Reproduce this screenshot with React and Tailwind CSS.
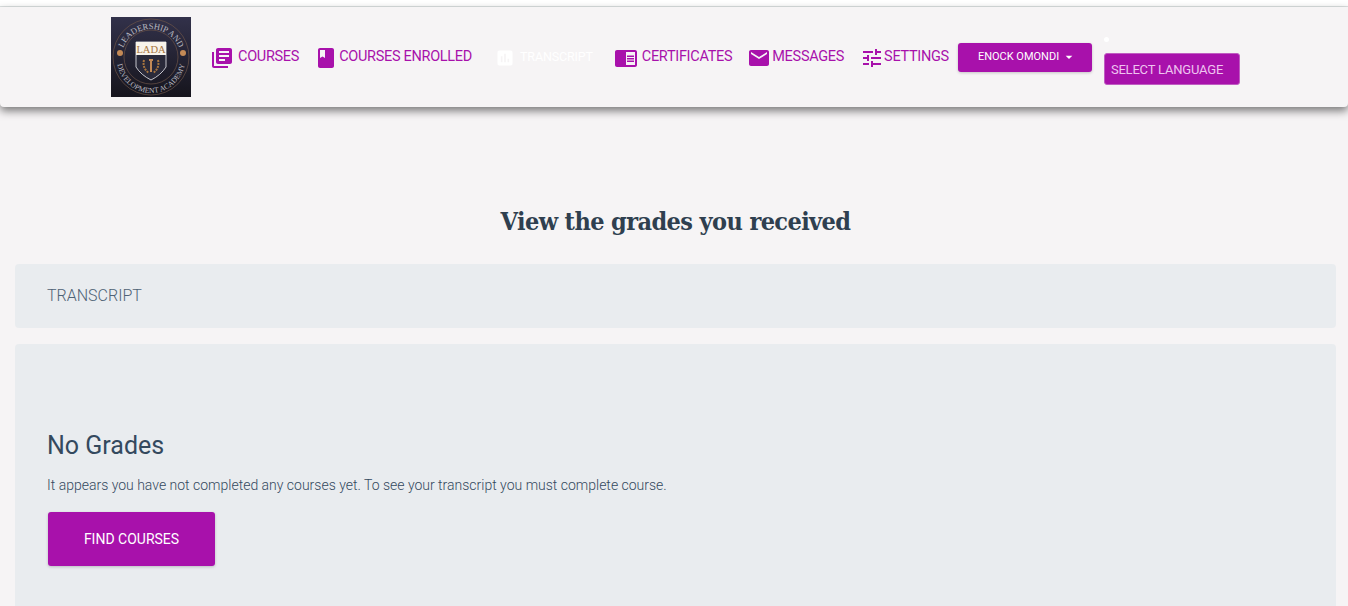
import { MdLibraryBooks, MdBook, MdAssessment, MdChromeReaderMode, MdEmail, MdTune, MdArrowDropDown } from 'react-icons/md'

function Logo() {
  return (
    <svg width="80" height="80" viewBox="0 0 80 80" className="shrink-0">
      <defs>
        <linearGradient id="logoBg" x1="0" y1="0" x2="0" y2="1">
          <stop offset="0" stopColor="#32314a" />
          <stop offset="1" stopColor="#16151d" />
        </linearGradient>
        <path id="arcTop" d="M10 42 A30 30 0 0 1 70 42" />
        <path id="arcBottom" d="M6 42 A34 34 0 0 0 74 42" />
      </defs>
      <rect width="80" height="80" fill="url(#logoBg)" />
      <circle cx="40" cy="40" r="38" fill="none" stroke="#6b5347" strokeWidth="0.7" />
      <circle cx="40" cy="40" r="27" fill="none" stroke="#6b5347" strokeWidth="0.7" />
      <text fontSize="8.500" fill="#b9b9c0" fontFamily="Liberation Serif, serif">
        <textPath href="#arcTop" startOffset="50%" textAnchor="middle">LEADERSHIP AND</textPath>
      </text>
      <text fontSize="7.600" fill="#b9b9c0" fontFamily="Liberation Serif, serif">
        <textPath href="#arcBottom" startOffset="50%" textAnchor="middle">DEVELOPMENT ACADEMY</textPath>
      </text>
      <circle cx="9" cy="36" r="3" fill="#c48a56" />
      <circle cx="72" cy="36" r="3" fill="#c48a56" />
      <path d="M25 25 H55 V50 Q50 58 40 63 Q30 58 25 50 Z" fill="#2a2a3a" stroke="#c5c5cc" strokeWidth="1" />
      <rect x="25" y="25" width="30" height="13" fill="#f8f3ea" />
      <text x="40" y="36" fontSize="10.500" fill="#a7753f" textAnchor="middle" fontFamily="Liberation Serif, serif">LADA</text>
      <path d="M40 43 V55 M38 43 H42" stroke="#c48a56" strokeWidth="2" fill="none" />
      <path d="M33 43 Q31 51 38 56 M47 43 Q49 51 42 56" stroke="#a7753f" strokeWidth="2" fill="none" strokeDasharray="2 1" />
    </svg>
  )
}

function NavLink({ icon: Icon, size, label, className }) {
  return (
    <a className={`flex items-center shrink-0 leading-6 ${className}`}>
      <Icon size={size} className="mt-[2px]" />
      <span>{label}</span>
    </a>
  )
}

export default function App() {
  return (
    <div className="h-[606px] overflow-hidden bg-[#f6f4f5] font-['Roboto',sans-serif] text-[#34495e]">
      <div className="h-[7px] bg-white border-b border-[#dde2e2]" />

      {/* Header */}
      <nav className="relative h-[100px] pl-[111px] flex items-center bg-[#f6f4f5] rounded-b-[4px] shadow-[0_4px_8px_rgba(0,0,0,0.5)]">
        <Logo />
        <div className="flex items-center text-[#a811ab] text-[14.5px] tracking-[-0.3px]">
          <NavLink icon={MdLibraryBooks} size={24} label="COURSES" className="ml-[19px] gap-[4px]" />
          <NavLink icon={MdBook} size={24} label="COURSES ENROLLED" className="ml-[15px] gap-[1px]" />
          <NavLink icon={MdAssessment} size={20} label="TRANSCRIPT" className="ml-[23px] gap-[5px] text-white text-[12.5px] tracking-[-0.15px]" />
          <NavLink icon={MdChromeReaderMode} size={24} label="CERTIFICATES" className="ml-[21px] gap-[4px]" />
          <NavLink icon={MdEmail} size={24} label="MESSAGES" className="ml-[15px] gap-[1px]" />
          <NavLink icon={MdTune} size={24} label="SETTINGS" className="ml-[16px] gap-0" />
          <button className="ml-[9px] w-[134px] h-[29px] pl-[20px] flex items-center rounded-[3px] bg-[#a811ab] text-white text-[11px] tracking-normal shadow-[0_1px_3px_rgba(0,0,0,0.2)]">
            ENOCK OMONDI
            <MdArrowDropDown size={16} className="ml-[2px]" />
          </button>
          <div className="relative ml-[12px] mt-[24px]">
            <span className="absolute -top-[16px] left-0 w-[5px] h-[5px] rounded-full bg-white" />
            <div className="w-[136px] h-[32px] pl-[6px] pt-[2px] flex items-center rounded-[3px] bg-[#a811ab] text-[#eec4ef] text-[13px] tracking-[-0.2px] border border-[#c05cc2]">
              SELECT LANGUAGE
            </div>
          </div>
        </div>
      </nav>

      <main className="pl-[15px] pr-[12px]">
        <h1 className="mt-[98px] text-center font-['DejaVu_Serif',serif] [font-stretch:condensed] font-bold text-[25px] leading-[34px] tracking-[-0.6px] text-[#2f3f4f]">
          View the grades you received
        </h1>

        <div className="mt-[25px] h-[64px] pl-[32px] flex items-center rounded-[4px] bg-[#e9ecef] text-[16px] text-[#4f6275] font-light">
          TRANSCRIPT
        </div>

        <section className="mt-[16px] h-[300px] pl-[32px] pt-[87px] rounded-[4px] bg-[#e9ecef]">
          <h2 className="text-[25px] leading-[30px] text-[#34495e]">No Grades</h2>
          <p className="mt-[12px] text-[14px] leading-[24px] font-light text-[#34495e]">
            It appears you have not completed any courses yet. To see your transcript you must complete course.
          </p>
          <button className="mt-[15px] ml-[1px] w-[167px] h-[54px] rounded-[3px] bg-[#a811ab] text-white text-[14px] shadow-[0_1px_3px_rgba(0,0,0,0.2)]">
            FIND COURSES
          </button>
        </section>
      </main>
    </div>
  )
}
